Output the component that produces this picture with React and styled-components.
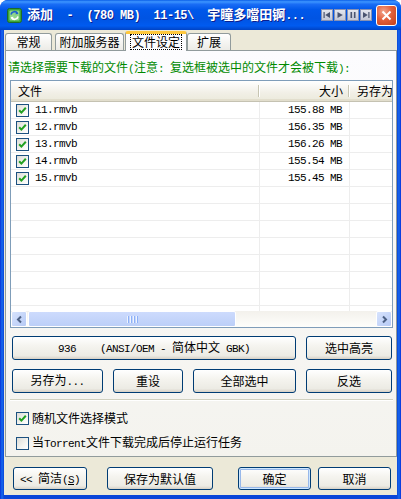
import React from "react";
import styled, { createGlobalStyle } from "styled-components";

const cjk = `"Noto Sans CJK SC", "Noto Sans", sans-serif`;
const mono = `"Liberation Mono", monospace`;

const GlobalStyle = createGlobalStyle`
  html, body { margin: 0; padding: 0; background: #ffffff; }
  body { font-family: ${cjk}; font-size: 12px; color: #000; }
  * { box-sizing: border-box; }
`;

const Lat = styled.span`
  font-family: ${mono};
  font-size: 11px;
  letter-spacing: -0.6px;
`;

const Window = styled.div`
  width: 401px;
  height: 499px;
  background: linear-gradient(90deg, #0831d9 0px, #166aee 2px, #0a45d8 4px, #0a45d8 397px, #166aee 399px, #0831d9 401px);
  border-radius: 8px 8px 0 0;
  display: flex;
  flex-direction: column;
  overflow: hidden;
`;

const TitleBar = styled.div`
  height: 30px;
  flex: none;
  display: flex;
  align-items: center;
  padding: 0 4px 0 7px;
  background: linear-gradient(180deg, #0a5fe8 0%, #3d95ff 6%, #1a6df5 14%, #0058ea 32%, #0054e3 62%, #005bf0 86%, #0043c4 100%);
`;

const TitleText = styled.div`
  flex: 1;
  margin-left: 5px;
  color: #ffffff;
  font-weight: bold;
  font-size: 13px;
  line-height: 20px;
  white-space: pre;
  text-shadow: 1px 1px 0 #0b1f8f;
  ${Lat} {
    font-size: 12px;
    letter-spacing: -0.5px;
    font-weight: bold;
  }
`;

const MediaGroup = styled.div`
  display: flex;
  gap: 1px;
  margin-right: 4px;
`;

const MediaBtn = styled.div`
  width: 12px;
  height: 12px;
  background: linear-gradient(180deg, #e4e6ee, #c3c7d6);
  border: 1px solid #8892b4;
  display: flex;
  align-items: center;
  justify-content: center;
`;

const CloseBtn = styled.div`
  width: 21px;
  height: 21px;
  border: 1px solid #ffffff;
  border-radius: 3px;
  background: radial-gradient(circle at 35% 30%, #f2a58e 0%, #e3603c 45%, #c3401b 100%);
  display: flex;
  align-items: center;
  justify-content: center;
`;

const Body = styled.div`
  flex: 1;
  margin: 0 4px 4px;
  padding-left: 1px;
  background: #ece9d8;
  display: flex;
  flex-direction: column;
`;

const TabStrip = styled.div`
  height: 20px;
  display: flex;
  align-items: flex-end;
`;

const Tab = styled.div`
  position: relative;
  width: ${(p) => p.$w}px;
  margin-left: ${(p) => p.$ml || 0}px;
  height: ${(p) => (p.$active ? 20 : 17)}px;
  margin-bottom: ${(p) => (p.$active ? -1 : 0)}px;
  z-index: ${(p) => (p.$active ? 1 : 0)};
  border: 1px solid #919b9c;
  border-bottom: none;
  border-top: ${(p) => (p.$active ? "3px solid #ffc83c" : "1px solid #919b9c")};
  border-radius: 3px 3px 0 0;
  background: ${(p) => (p.$active ? "#fcfcfe" : "linear-gradient(180deg, #ffffff, #ecebe6)")};
  display: flex;
  align-items: center;
  justify-content: center;
  line-height: 14px;
  padding-bottom: ${(p) => (p.$active ? 1 : 0)}px;
`;

const Focus = styled.span`
  outline: 1px dotted #000;
  outline-offset: 0px;
  padding: 0 1px;
`;

const Panel = styled.div`
  width: 392px;
  height: 407px;
  border: 1px solid #919b9c;
  background: linear-gradient(180deg, #fcfcfe, #f4f3ee);
  display: flex;
  flex-direction: column;
`;

const Hint = styled.div`
  margin: 9px 0 0 2px;
  color: #008a00;
  line-height: 14px;
  white-space: pre;
`;

const ListView = styled.div`
  margin: 4px 0 0 4px;
  width: 383px;
  height: 248px;
  border: 1px solid #7f9db9;
  background: #ffffff;
  display: flex;
  flex-direction: column;
`;

const ListArea = styled.div`
  flex: 1;
  overflow: hidden;
`;

const cols = "249px 90px 140px";

const Header = styled.div`
  display: grid;
  grid-template-columns: ${cols};
  height: 21px;
  background: linear-gradient(180deg, #ffffff 0%, #f1efe6 60%, #ebeadb 100%);
  border-bottom: 1px solid #c5c2b2;
  box-shadow: inset 0 -2px 0 #e2decd;
`;

const HeadCell = styled.div`
  position: relative;
  display: flex;
  align-items: center;
  justify-content: ${(p) => (p.$right ? "flex-end" : "flex-start")};
  padding: 0 7px;
  line-height: 14px;
  white-space: nowrap;
  &::after {
    content: ${(p) => (p.$div ? "''" : "none")};
    position: absolute;
    right: 1px;
    top: 4px;
    bottom: 4px;
    width: 1px;
    background: #c7c5b2;
    box-shadow: 1px 0 0 #ffffff;
  }
`;

const Row = styled.div`
  display: grid;
  grid-template-columns: ${cols};
  height: 17px;
  border-bottom: 1px solid #ededed;
`;

const Cell = styled.div`
  display: flex;
  align-items: center;
  justify-content: ${(p) => (p.$right ? "flex-end" : "flex-start")};
  padding: ${(p) => (p.$right ? "0 7px 0 0" : "0 0 0 5px")};
  gap: 6px;
  border-right: ${(p) => (p.$last ? "none" : "1px solid #ededed")};
  white-space: nowrap;
`;

const BoxWrap = styled.div`
  width: 13px;
  height: 13px;
  flex: none;
  border: 1px solid #1c5180;
  background: linear-gradient(135deg, #dcdcd7 0%, #f4f4f0 60%, #ffffff 100%);
  display: flex;
  align-items: center;
  justify-content: center;
`;

const HScroll = styled.div`
  height: 16px;
  flex: none;
  display: flex;
  background: linear-gradient(180deg, #f3f1ec, #fefefb);
`;

const ScrollBtn = styled.div`
  width: 16px;
  height: 16px;
  flex: none;
  border: 1px solid #ffffff;
  border-radius: 2px;
  background: linear-gradient(135deg, #d7e3fd, #b6caf5);
  display: flex;
  align-items: center;
  justify-content: center;
`;

const Thumb = styled.div`
  width: 208px;
  margin-left: 1px;
  height: 16px;
  border: 1px solid #ffffff;
  border-radius: 2px;
  background: linear-gradient(180deg, #cddbfd, #bccff8);
  display: flex;
  align-items: center;
  justify-content: center;
  gap: 1px;
`;

const Grip = styled.span`
  width: 1px;
  height: 7px;
  background: #eef4fe;
  box-shadow: 1px 0 0 #8cb0f8;
  margin-right: 1px;
`;

const Track = styled.div`
  flex: 1;
`;

const ButtonRow = styled.div`
  display: flex;
  gap: 10px;
  margin: ${(p) => p.$mt}px 0 0 6px;
`;

const Button = styled.div`
  width: ${(p) => p.$w}px;
  height: ${(p) => p.$h || 24}px;
  flex: none;
  border: 1px solid #003c74;
  border-radius: 3px;
  background: linear-gradient(180deg, #ffffff 0%, #f5f4ef 40%, #ecebe4 85%, #d6d0c5 100%);
  box-shadow: ${(p) => (p.$default ? "inset 0 0 0 1px #cee7ff, inset 0 0 0 2px #98b8ea" : "none")};
  display: flex;
  align-items: center;
  justify-content: center;
  line-height: 14px;
  white-space: pre;
`;

const Separator = styled.div`
  margin: 6px 0 0 4px;
  width: 383px;
  height: 2px;
  border-top: 1px solid #d0d0bf;
  border-bottom: 1px solid #ffffff;
`;

const CheckRow = styled.div`
  display: flex;
  align-items: center;
  gap: 3px;
  height: 16px;
  margin: 9px 0 0 10px;
  line-height: 14px;
  white-space: nowrap;
`;

const Label = styled.span`
  white-space: pre;
`;

const Footer = styled.div`
  display: flex;
  margin: 10px 0 0 8px;
`;

const Gap = styled.div`
  width: ${(p) => p.$w}px;
  flex: none;
`;

function Check({ on }) {
  return (
    <BoxWrap>
      {on && (
        <svg width="9" height="9" viewBox="0 0 9 9">
          <path d="M1.2 4.2 L3.4 6.6 L7.8 1.8" fill="none" stroke="#21a121" strokeWidth="2" />
        </svg>
      )}
    </BoxWrap>
  );
}

function AppIcon() {
  return (
    <svg width="15" height="15" viewBox="0 0 15 15">
      <rect x="0.5" y="0.5" width="14" height="14" rx="2" fill="#3aa53a" stroke="#1d6b2a" />
      <rect x="2.5" y="2.5" width="10" height="10" rx="1" fill="#8fd48a" />
      <path d="M4 6.5 A3.5 3.5 0 0 1 10.5 5.5" fill="none" stroke="#1d5fd0" strokeWidth="1.6" />
      <path d="M11 8.5 A3.5 3.5 0 0 1 4.5 9.5" fill="none" stroke="#ffffff" strokeWidth="1.6" />
      <path d="M9.5 3.5 L11.5 6 L8.5 6.2 Z" fill="#1d5fd0" />
      <path d="M5.5 11.5 L3.5 9 L6.5 8.8 Z" fill="#ffffff" />
    </svg>
  );
}

const glyph = "#4a5470";

function MediaIcon({ kind }) {
  return (
    <svg width="8" height="8" viewBox="0 0 8 8">
      {kind === "prev" && (
        <>
          <rect x="0.5" y="1" width="1.2" height="6" fill={glyph} />
          <path d="M7 1 L2.2 4 L7 7 Z" fill={glyph} />
        </>
      )}
      {kind === "play" && <path d="M1.5 1 L6.8 4 L1.5 7 Z" fill={glyph} />}
      {kind === "pause" && (
        <>
          <rect x="1.5" y="1" width="1.6" height="6" fill={glyph} />
          <rect x="4.9" y="1" width="1.6" height="6" fill={glyph} />
        </>
      )}
      {kind === "next" && (
        <>
          <path d="M1 1 L5.8 4 L1 7 Z" fill={glyph} />
          <rect x="6.3" y="1" width="1.2" height="6" fill={glyph} />
        </>
      )}
    </svg>
  );
}

function Arrow({ dir }) {
  const d = dir === "left" ? "M6 1.5 L3 4.5 L6 7.5" : "M3 1.5 L6 4.5 L3 7.5";
  return (
    <svg width="9" height="9" viewBox="0 0 9 9">
      <path d={d} fill="none" stroke="#4d6185" strokeWidth="2" />
    </svg>
  );
}

const files = [
  ["11.rmvb", "155.88 MB"],
  ["12.rmvb", "156.35 MB"],
  ["13.rmvb", "156.26 MB"],
  ["14.rmvb", "155.54 MB"],
  ["15.rmvb", "155.45 MB"],
];

export default function App() {
  const empty = Array.from({ length: 9 });
  return (
    <>
      <GlobalStyle />
      <Window>
        <TitleBar>
          <AppIcon />
          <TitleText>
            添加<Lat>{"  -  (780 MB)  11-15\\  "}</Lat>宇瞳多噹田锕<Lat>...</Lat>
          </TitleText>
          <MediaGroup>
            <MediaBtn><MediaIcon kind="prev" /></MediaBtn>
            <MediaBtn><MediaIcon kind="play" /></MediaBtn>
            <MediaBtn><MediaIcon kind="pause" /></MediaBtn>
            <MediaBtn><MediaIcon kind="next" /></MediaBtn>
          </MediaGroup>
          <CloseBtn>
            <svg width="11" height="11" viewBox="0 0 11 11">
              <path d="M1.5 1.5 L9.5 9.5 M9.5 1.5 L1.5 9.5" stroke="#ffffff" strokeWidth="2" />
            </svg>
          </CloseBtn>
        </TitleBar>

        <Body>
          <TabStrip>
            <Tab $w={47}>常规</Tab>
            <Tab $w={69} $ml={3}>附加服务器</Tab>
            <Tab $w={62} $ml={1} $active>
              <Focus>文件设定</Focus>
            </Tab>
            <Tab $w={44}>扩展</Tab>
          </TabStrip>

          <Panel>
            <Hint>
              请选择需要下载的文件<Lat>(</Lat>注意<Lat>: </Lat>复选框被选中的文件才会被下载<Lat>):</Lat>
            </Hint>

            <ListView>
              <ListArea>
                <Header>
                  <HeadCell $div>文件</HeadCell>
                  <HeadCell $div $right>大小</HeadCell>
                  <HeadCell>另存为</HeadCell>
                </Header>
                {files.map(([name, size]) => (
                  <Row key={name}>
                    <Cell>
                      <Check on />
                      <Lat>{name}</Lat>
                    </Cell>
                    <Cell $right>
                      <Lat>{size}</Lat>
                    </Cell>
                    <Cell $last />
                  </Row>
                ))}
                {empty.map((_, i) => (
                  <Row key={i}>
                    <Cell />
                    <Cell $right />
                    <Cell $last />
                  </Row>
                ))}
              </ListArea>
              <HScroll>
                <ScrollBtn><Arrow dir="left" /></ScrollBtn>
                <Thumb>
                  <Grip /><Grip /><Grip /><Grip />
                </Thumb>
                <Track />
                <ScrollBtn><Arrow dir="right" /></ScrollBtn>
              </HScroll>
            </ListView>

            <ButtonRow $mt={8}>
              <Button $w={284}>
                <Label>
                  <Lat>{"936    (ANSI/OEM - "}</Lat>简体中文<Lat>{" GBK)"}</Lat>
                </Label>
              </Button>
              <Button $w={86}>选中高亮</Button>
            </ButtonRow>
            <ButtonRow $mt={9}>
              <Button $w={91}>
                <Label>另存为<Lat>...</Lat></Label>
              </Button>
              <Button $w={70}>重设</Button>
              <Button $w={103}>全部选中</Button>
              <Button $w={86}>反选</Button>
            </ButtonRow>

            <Separator />

            <CheckRow>
              <Check on />
              <Label>随机文件选择模式</Label>
            </CheckRow>
            <CheckRow>
              <Check />
              <Label>当<Lat>Torrent</Lat>文件下载完成后停止运行任务</Label>
            </CheckRow>
          </Panel>

          <Footer>
            <Button $w={74} $h={23}>
              <Label><Lat>{"<< "}</Lat>简洁<Lat>(<u>S</u>)</Lat></Label>
            </Button>
            <Gap $w={20} />
            <Button $w={106} $h={23}>保存为默认值</Button>
            <Gap $w={25} />
            <Button $w={73} $h={23} $default>确定</Button>
            <Gap $w={7} />
            <Button $w={73} $h={23}>取消</Button>
          </Footer>
        </Body>
      </Window>
    </>
  );
}
